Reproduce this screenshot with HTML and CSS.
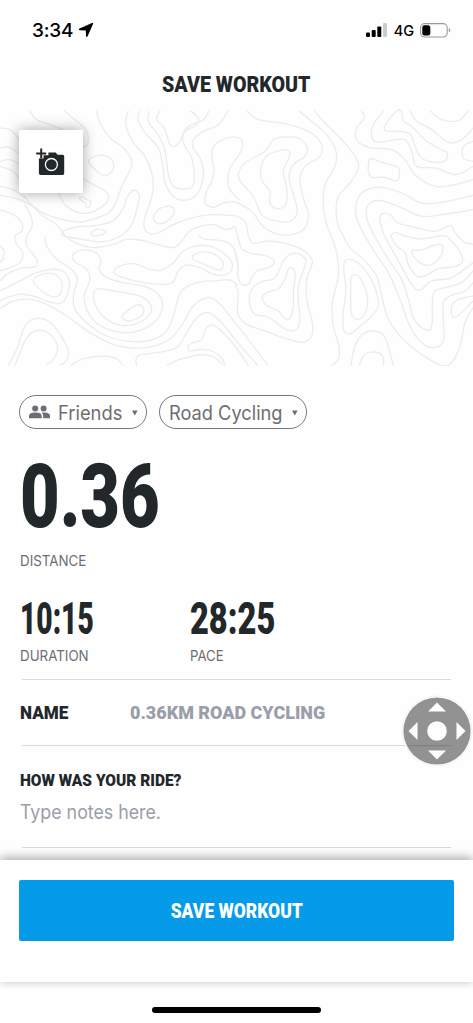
FILE: index.html
```html
<!DOCTYPE html>
<html lang="en">
<head>
<meta charset="utf-8">
<title>Save Workout</title>
<link rel="stylesheet" href="styles.css">
</head>
<body>
<div class="screen">
  <div class="status">
    <span class="clock">3:34</span>
    <svg class="arrow" width="16" height="16" viewBox="0 0 16 16"><path d="M14 1Q15.6.4 15 2L9.6 14.2Q8.5 15.8 8 14L7.8 8.6 2 8.3Q-.2 7.6 1.6 6.4Z"/></svg>
    <svg class="signal" width="22" height="15" viewBox="0 0 22 15"><rect x="0" y="9.4" width="4" height="4.6" rx="1"/><rect x="5.7" y="7" width="4" height="7" rx="1"/><rect x="11.3" y="3.5" width="4" height="10.5" rx="1"/><rect x="17" y="0" width="4" height="14" rx="1" fill="#ccc"/></svg>
    <span class="network">4G</span>
    <svg class="battery" width="31" height="15" viewBox="0 0 31 15"><rect x=".6" y=".6" width="26.6" height="13.4" rx="4" fill="none" stroke="#999" stroke-width="1.1"/><rect x="2.3" y="2.2" width="8" height="10.2" rx="2.2"/><path d="M28.8 5Q30.3 5.8 30.3 7.3T28.8 9.6Z" fill="#999"/></svg>
  </div>
  <h1 class="title"><span class="title-text">SAVE WORKOUT</span></h1>

  <div class="map">
    <svg class="contours" id="contours" viewBox="0 0 1419 774"></svg>
    <button class="photo">
      <svg width="30" height="28" viewBox="0 0 30 28"><path fill="#22272a" d="M12.4 4.5h7.3l1.8 2.3h5.2q1.5 0 1.5 1.5v17q0 1.6-1.6 1.6H4.5q-1.6 0-1.6-1.6V10.5h4.6V7.2h4.9Z"/><path d="M5.2.5v10M.2 5.4h10" stroke="#22272a" stroke-width="2" fill="none"/><circle cx="15.4" cy="16.5" r="6" fill="none" stroke="#fff" stroke-width="1.3"/></svg>
    </button>
  </div>

  <div class="content">
    <div class="chips">
      <div class="chip friends">
        <svg class="people" width="21" height="14" viewBox="0 0 21 14"><circle cx="6.2" cy="3.4" r="3"/><circle cx="14.6" cy="3.4" r="3"/><path d="M0 13.3v-2.4Q.3 7.6 6.4 7.6t6.3 3.3v2.4ZM14.2 13.3v-2.4q0-1.9-1.5-3.2 8-.7 8.3 3.2v2.4Z"/></svg>
        <span class="chip-text friends-text">Friends</span>
        <svg class="caret" width="6" height="6" viewBox="0 0 6 6"><path d="M0 .5h5.6L2.8 5.5Z"/></svg>
      </div>
      <div class="chip sport">
        <span class="chip-text sport-text">Road Cycling</span>
        <svg class="caret" width="6" height="6" viewBox="0 0 6 6"><path d="M0 .5h5.6L2.8 5.5Z"/></svg>
      </div>
    </div>

    <div class="distance"><span class="distance-value">0.36</span></div>
    <div class="label label-distance"><span class="distance-label">DISTANCE</span></div>
    <div class="stats">
      <div class="stat">
        <div class="value"><span class="duration-value">10:15</span></div>
        <div class="label"><span class="duration-label">DURATION</span></div>
      </div>
      <div class="stat">
        <div class="value"><span class="pace-value">28:25</span></div>
        <div class="label"><span class="pace-label">PACE</span></div>
      </div>
    </div>
    <div class="name-row">
      <div class="name-key"><span class="name-text">NAME</span></div>
      <div class="name-value"><span class="ride-text">0.36KM ROAD CYCLING</span></div>
    </div>
    <div class="notes">
      <div class="question"><span class="question-text">HOW WAS YOUR RIDE?</span></div>
      <div class="placeholder"><span class="placeholder-text">Type notes here.</span></div>
    </div>
  </div>

  <div class="footer">
    <button class="save"><span class="save-text">SAVE WORKOUT</span></button>
  </div>
  <div class="home"></div>

  <svg class="pad" width="72" height="72" viewBox="0 0 72 72"><circle cx="36" cy="36" r="35" fill="#fff" stroke="#eee" stroke-width=".8"/><circle cx="36" cy="36" r="33.6" fill="#929292"/><path d="M6.5 50.7H50" stroke="#7e7e7e"/><g fill="#fff"><circle cx="36" cy="36" r="9.8"/><path d="M36 7.5l9 9H27ZM36 64.5l9-9H27ZM7.5 36l9-9v18ZM64.5 36l-9-9v18Z"/></g></svg>
</div>
<script src="contours.js"></script>
</body>
</html>
```

FILE: styles.css
```css
* { box-sizing: border-box; }
body { margin: 0; background: #fff; font-family: Inter, "Liberation Sans", sans-serif; }
button { border: 0; padding: 0; font: inherit; }
svg { display: block; flex: none; }
span { white-space: nowrap; }

.screen { position: relative; width: 473px; height: 1023px; overflow: hidden; display: flex; flex-direction: column; background: #fefefe; color: #22272a; }

.status { height: 60px; flex: none; display: flex; align-items: center; padding: 0 22px 0 32px; color: #000; }
.clock { font-size: 19px; font-weight: 550; width: 45px; letter-spacing: -.2px; }
.arrow { margin-left: 1px; }
.signal { margin-left: auto; }
.network { font-size: 14.5px; font-weight: 500; margin: 1px 6px 0 6px; }

.title { margin: 0; height: 48px; flex: none; font: 900 21.5px/49px Roboto, sans-serif; text-align: center; }
.title-text { display: inline-block; transform: scaleX(.913); }

.map { position: relative; height: 258px; flex: none; }
.contours { width: 473px; height: 258px; fill: none; stroke: #ececed; stroke-width: 4; }
.photo { position: absolute; left: 19px; top: 22px; width: 64px; height: 63px; padding: 18px 0 0 17px; display: flex; align-items: flex-start; border-radius: 1px; background: #fff; box-shadow: 0 0 14px rgba(0, 0, 0, .36); }

.content { flex: none; height: 494px; padding: 29px 20px 0; }
.chips { display: flex; gap: 12px; margin-left: -1px; }
.chip { height: 34px; border: 1px solid #77787b; border-radius: 17px; display: flex; align-items: center; color: #6d6e71; fill: #6d6e71; }
.friends { width: 128px; padding: 0 8px 0 9px; }
.sport { width: 148px; padding: 0 8px 0 9px; }
.chip-text { font-size: 19.5px; padding-top: 2px; transform-origin: left; }
.friends-text { margin-left: 8px; width: 66px; transform: scaleX(.94); }
.sport-text { width: 116px; transform: scaleX(.935); }
.caret { margin-left: auto; margin-top: 2px; }

.distance { margin-top: 23px; height: 90px; font: 900 88.5px/91px Roboto, sans-serif; }
.distance-value, .duration-value, .pace-value, .distance-label, .duration-label, .pace-label,
.name-text, .ride-text, .question-text, .placeholder-text { display: inline-block; transform-origin: left; }
.distance-value { transform: scaleX(.773); }
.label { height: 20px; font-size: 14.5px; line-height: 20px; color: #6d6e71; }
.label-distance { margin-top: 9px; }
.distance-label { transform: scaleX(.92); }
.duration-label { transform: scaleX(.92); }
.pace-label { transform: scaleX(.91); }

.stats { height: 108px; padding-top: 27px; display: grid; grid-template-columns: 170px 170px; }
.value { height: 48px; font: 900 44px/43px Roboto, sans-serif; }
.duration-value { transform: scaleX(.64); }
.pace-value { transform: scaleX(.74); }

.name-row { margin: 0 2px; height: 67px; border-top: 1px solid #d9d9db; border-bottom: 1px solid #d9d9db; display: flex; align-items: center; font: 900 19px/24px Roboto, sans-serif; padding-top: 1px; }
.name-key { width: 110px; margin-left: -2px; }
.name-text { transform: scaleX(.9); }
.name-value { color: #9a9ea9; }
.ride-text { transform: scaleX(.945); }

.notes { margin: 0 2px; height: 102px; border-bottom: 1px solid #d9d9db; padding-top: 24px; }
.question { margin-left: -2px; height: 30px; font: 900 17px/20px Roboto, sans-serif; }
.question-text { transform: scaleX(.908); }
.placeholder { margin-left: -2px; height: 24px; font-size: 19.5px; line-height: 24px; color: #9a9ea9; }
.placeholder-text { transform: scaleX(.912); }

.footer { position: relative; height: 122px; flex: none; background: #fefefe; padding: 20px 19px; box-shadow: 0 -2px 10px rgba(0, 0, 0, .36); clip-path: inset(-20px 0 -7px 0); }
.save { display: block; width: 435px; height: 61px; border-radius: 2px; background: #059be9; color: #fff; font: 900 19.5px/63px Roboto, sans-serif; }
.save-text { display: inline-block; transform: scaleX(.896); }
.home { width: 169px; height: 6px; margin: 25px auto 0; border-radius: 3px; background: #000; }
.pad { position: absolute; left: 401px; top: 695px; }
```

FILE: contours.js
```js
// Topographic contour lines, grouped by tile. A leading "c" marks a closed ring.
const tiles = [
  { x: 0, y: 0, lines: [
    "88,8 110,35 150,50 190,65",
    "192,8 225,35 255,62 265,85 262,110 250,116",
    "290,8 300,45 330,90 365,115 390,145 395,175 375,215 360,250 345,290 325,315 290,330 240,342 190,335 140,320 90,290 50,272 0,262",
    "385,8 377,40 385,75 405,110 435,145 455,195 460,240 450,285 440,310 432,340 435,365 455,378 480,372 520,350 560,335 610,322 650,320 705,323",
    "447,8 445,40 470,75 490,110 500,160 505,200 520,235 550,243 578,235 583,200 575,150 553,110 548,85 565,55 610,35 627,8",
    "418,8 415,40 440,80 475,120 488,170 495,225 520,265 550,277 585,265 605,230 610,185 600,150 580,120 580,95 610,70 655,50 685,8",
    "480,8 470,35 490,55 500,80 510,110 525,115 540,100 555,70 590,50 595,30 570,8",
    "705,87 680,90 645,110 635,140 642,185 635,220 620,250 615,285 640,298 670,285 705,280",
    "705,158 690,180 683,210 690,245 718,277",
    "c460,330 475,305 500,295 520,300 520,320 500,340 475,347",
    "c265,160 280,147 310,142 335,155 340,180 325,200 305,200 280,180",
    "175,255 195,290 230,312 265,315 300,300 325,275 318,250 290,235 245,210",
    "c238,272 245,267 260,275 272,280 270,295 260,298 255,285",
    "c192,384 190,370 230,357 290,352 340,338 370,300 380,270 400,247 418,262 410,305 395,350 362,384 310,401 260,396",
    "c273,375 290,365 312,367 315,375 295,383 280,383",
    "60,255 95,290 130,325 170,350 200,388 230,406 280,419 340,409 380,394 420,396 470,409 520,419 545,399 570,368 600,355 640,350 680,365 705,355",
    "0,60 30,65 50,85 60,100", "0,120 30,118 60,140", "0,160 30,155 60,170", "0,175 40,190 60,215",
    "0,235 40,245 80,270",
    "0,305 40,320 65,345 65,370 45,384 50,409 68,434 60,464 30,479 0,489",
    "75,290 95,330 95,360 80,384 80,414 110,454 105,476 60,481 20,499 0,519"
  ]},
  { x: 705, y: 0, lines: [
    "35,8 70,35 150,47 220,70 258,105 255,145 210,175 195,215 205,270 220,320 205,365 150,382 90,360 50,310 0,280",
    "c145,87 190,90 215,115 210,145 175,170 162,210 175,260 187,310 165,340 120,338 80,320 55,265 20,225 10,200 30,165 90,130 115,95",
    "c150,125 165,135 155,165 145,190 155,240 155,280 140,300 115,298 103,280 105,250 80,215 80,170 100,140",
    "0,87 20,95 20,125 0,158",
    "190,8 230,40 275,80 303,130 300,175 270,230 265,290 275,350 288,384 305,434 310,504 292,584 295,654 312,714 310,754 292,772",
    "238,8 270,45 320,95 360,145 370,180 345,225 310,265 303,310 310,355 325,384 345,419 390,459 425,504 440,564 460,634 500,689 560,739 620,772 650,764 675,714 690,644 714,599",
    "380,8 388,30 365,60 365,95 400,118 470,125 510,155 540,200 600,235 660,230 714,215",
    "447,8 415,50 410,85 425,103 465,98 510,95 530,130 545,175 600,180 665,200 714,175",
    "c455,45 485,10 500,10 505,40 530,55 570,95 610,120 637,135 630,158 600,163 560,150 540,115 525,78 490,70 450,68",
    "525,8 545,40 590,65 640,103 680,95 714,60",
    "585,8 620,35 670,38 700,8",
    "714,100 685,115 685,150 714,160",
    "c403,155 415,153 440,163 485,175 493,190 490,215 475,217 450,208 410,208 400,190",
    "390,384 365,330 365,280 390,248 440,238 500,255 560,285 620,283 714,262",
    "418,384 395,330 400,290 440,278 500,300 560,325 620,320 714,305",
    "448,384 435,340 440,318 465,320 490,345 550,360 600,370 645,353 658,370 668,384 690,404 714,409",
    "467,384 480,373 510,384 560,393 610,384 635,384",
    "0,323 30,340 40,384", "0,355 8,384"
  ]},
  { x: 0, y: 384, lines: [
    "0,28 12,45 8,70 0,80",
    "135,0 140,30 170,70 215,100 232,130 220,180 225,220 260,260 320,300 400,317 460,310 500,285 520,240 535,185 550,160 590,140 650,134 690,132 713,148",
    "0,165 50,140 110,110 170,100 200,115 208,150 195,190 175,203 140,195 100,180 60,175 20,185 0,195",
    "c100,135 120,117 155,112 180,128 187,155 175,180 155,182 125,165",
    "0,218 40,195 90,190 140,205 200,240 270,290 340,325 410,337 470,328 515,305 550,260 580,210 625,185 660,205 705,260 745,310 803,388",
    "410,388 408,370 420,357 470,350 530,335 560,290 590,245 625,230 660,255 705,310 773,388",
    "500,388 540,370 600,357 640,362 670,388",
    "675,388 665,365 635,345 600,340 570,345 565,328 580,320 605,310 620,275 640,268 670,290 705,330 745,388",
    "c217,60 230,47 260,42 290,52 303,75 297,100 320,125 370,140 430,150 470,170 488,205 475,245 440,275 390,290 340,285 290,262 260,220 253,180 270,130 260,100 225,78",
    "c280,175 295,158 340,165 385,172 430,185 455,215 440,245 400,265 360,268 320,250 290,215",
    "c365,242 385,222 410,207 428,212 430,232 410,248 385,255",
    "c343,110 355,92 400,83 450,100 480,103 520,80 550,45 600,28 650,38 690,70 697,95 680,115 640,115 600,95 560,87 535,105 520,138 490,145 430,140 370,125",
    "c578,68 590,52 630,50 665,72 668,95 655,102 620,88",
    "595,0 620,10 670,15 700,35 713,80 713,120",
    "25,388 50,340 75,270 105,248 145,255 180,295 205,345 198,375 180,388",
    "45,388 75,315 100,287 130,284 160,305 173,340 160,370 140,388",
    "213,388 250,368 310,360 350,368 368,388"
  ]},
  { x: 705, y: 384, lines: [
    "8,0 20,38 50,52 95,60 118,77 100,95 65,105 50,125 40,145 20,145 8,120 8,80 0,50",
    "40,0 55,22 100,15 150,22 200,40 232,75 215,130 215,190 232,260 230,300 205,318 160,310 90,285 30,262 8,230 10,170 0,148",
    "c145,75 165,55 195,55 213,75 205,105 190,150 190,200 195,250 185,280 160,283 130,265 100,243 60,235 43,200 50,160 80,137 120,125",
    "c160,100 175,97 180,120 175,170 175,215 165,247 150,248 130,225 95,208 82,185 95,170 130,158 150,130",
    "c330,75 360,75 400,115 425,170 428,215 400,250 370,275 345,293 325,280 325,230 333,160 327,110",
    "c350,120 370,120 390,155 398,200 385,240 365,250 350,235 347,190 347,150",
    "348,388 360,330 385,293 420,285 450,305 475,388",
    "372,388 390,355 420,348 443,360 445,388",
    "390,0 420,50 460,110 495,190 520,260 555,315 595,335 625,315 625,250 625,200 645,180 690,165 714,140",
    "418,0 460,70 500,130 520,190 535,245 560,275 585,280 592,255 592,200 600,165 640,152 680,140 714,105",
    "448,0 490,75 530,145 555,162 590,135 650,125 714,80",
    "467,0 485,30 510,50 520,85 545,120 570,120 610,98 660,92 683,75 670,40 635,0",
    "c530,45 560,42 600,27 622,28 620,55 600,80 575,88 545,72",
    "714,180 670,190 650,210 652,240 670,238 714,195"
  ]}
];

// Smooth path through the points (Catmull-Rom converted to cubic segments).
function smooth(line) {
  const closed = line[0] === "c";
  const p = line.replace("c", "").split(" ").map(s => s.split(",").map(Number));
  const n = p.length;
  const at = i => closed ? p[(i + n) % n] : p[Math.max(0, Math.min(n - 1, i))];
  let d = "M" + p[0];
  for (let i = 0; i < (closed ? n : n - 1); i++) {
    const a = at(i - 1), b = at(i), c = at(i + 1), e = at(i + 2);
    d += "C" + [b[0] + (c[0] - a[0]) / 6, b[1] + (c[1] - a[1]) / 6,
      c[0] - (e[0] - b[0]) / 6, c[1] - (e[1] - b[1]) / 6, c[0], c[1]].map(v => v.toFixed(1));
  }
  return d;
}

const svg = document.getElementById("contours");
for (const tile of tiles) {
  for (const line of tile.lines) {
    const path = document.createElementNS("http://www.w3.org/2000/svg", "path");
    path.setAttribute("d", smooth(line));
    path.setAttribute("transform", `translate(${tile.x} ${tile.y})`);
    svg.appendChild(path);
  }
}
```
